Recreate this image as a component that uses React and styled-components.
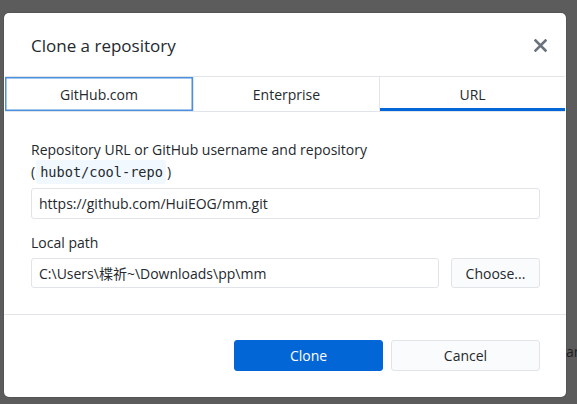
import React, { useState } from 'react';
import styled, { createGlobalStyle } from 'styled-components';

const GlobalStyle = createGlobalStyle`
  html, body {
    margin: 0;
    padding: 0;
    background-color: #5c5c5c;
  }
  body {
    font-family: "Segoe UI", "Open Sans", "Noto Sans CJK SC", sans-serif;
    color: #24292e;
  }
`;

const Page = styled.div`
  position: relative;
  width: 577px;
  height: 404px;
  overflow: hidden;
  padding: 13px 0 0 4px;
  box-sizing: border-box;
`;

const BehindText = styled.span`
  position: absolute;
  left: 566px;
  top: 342px;
  font-size: 14px;
  color: #1e1e1e;
`;

const Dialog = styled.div`
  display: flex;
  flex-direction: column;
  width: 562px;
  height: 384px;
  background-color: #ffffff;
  border-radius: 5px;
  box-shadow: 0 0 0 1px rgba(0, 0, 0, 0.08);
  box-sizing: border-box;
`;

const Header = styled.div`
  display: flex;
  flex-direction: row;
  align-items: center;
  justify-content: space-between;
  height: 63px;
  padding: 2px 15px 0 27px;
  box-sizing: border-box;
`;

const Title = styled.div`
  font-size: 17px;
  font-weight: 400;
  color: #24292e;
`;

const CloseButton = styled.button`
  display: flex;
  align-items: center;
  justify-content: center;
  width: 22px;
  height: 22px;
  background: none;
  border: none;
  padding: 0;
  cursor: pointer;
`;

const TabBar = styled.div`
  display: grid;
  grid-template-columns: 188px 186px 186px;
  margin: 0 1px;
  height: 36px;
  border-top: 1px solid #e1e4e8;
  border-bottom: 1px solid #e1e4e8;
  box-sizing: border-box;
`;

const Tab = styled.button`
  position: relative;
  display: flex;
  align-items: center;
  justify-content: center;
  background: #ffffff;
  border: none;
  border-left: ${(p) => (p.$first ? 'none' : '1px solid #e1e4e8')};
  font-family: inherit;
  font-size: 14px;
  color: #24292e;
  padding: 0;
  cursor: pointer;
  box-shadow: ${(p) => (p.$focused ? 'inset 0 0 0 1.5px #4a8fe0' : 'none')};

  &::after {
    content: '';
    position: absolute;
    left: 0;
    right: 0;
    bottom: 0;
    height: 3px;
    background-color: ${(p) => (p.$selected ? '#0366d6' : 'transparent')};
  }
`;

const Content = styled.div`
  display: flex;
  flex-direction: column;
  padding: 28px 26px 26px 27px;
  border-bottom: 1px solid #e1e4e8;
`;

const Label = styled.div`
  font-size: 14px;
  line-height: 20px;
  color: #24292e;
  margin-top: ${(p) => p.$top || 0}px;
`;

const Hint = styled.div`
  display: flex;
  align-items: center;
  font-size: 14px;
  line-height: 24px;
`;

const Code = styled.code`
  font-family: "DejaVu Sans Mono", "Liberation Mono", monospace;
  font-size: 13.6px;
  background-color: #f1f8ff;
  border-radius: 3px;
  padding: 0 3px 0 4px;
  margin: 0 1px;
  color: #24292e;
`;

const Row = styled.div`
  display: flex;
  flex-direction: row;
  gap: 12px;
  margin-top: ${(p) => p.$top || 0}px;
`;

const TextInput = styled.input`
  flex: 1;
  height: ${(p) => p.$h || 30}px;
  box-sizing: border-box;
  border: 1px solid #e1e4e8;
  border-radius: 3px;
  padding: 0 7px;
  font-family: "Segoe UI", "Open Sans", "Noto Sans CJK SC", sans-serif;
  font-size: 14px;
  color: #24292e;
  outline: none;
`;

const Button = styled.button`
  height: ${(p) => p.$h || 31}px;
  width: ${(p) => p.$w}px;
  box-sizing: border-box;
  border-radius: 3px;
  font-family: inherit;
  font-size: 14px;
  cursor: pointer;
  border: 1px solid ${(p) => (p.$primary ? '#0366d6' : '#e1e4e8')};
  background-color: ${(p) => (p.$primary ? '#0366d6' : '#fafbfc')};
  color: ${(p) => (p.$primary ? '#ffffff' : '#24292e')};
`;

const Footer = styled.div`
  display: flex;
  flex-direction: row;
  justify-content: flex-end;
  gap: 8px;
  padding: 25px 26px 0 0;
`;

function CloseIcon() {
  return (
    <svg width="13" height="13" viewBox="0 0 13 13">
      <path d="M1.5 1.5 L11.5 11.5 M11.5 1.5 L1.5 11.5" stroke="#6a737d" strokeWidth="2.6" strokeLinecap="square" />
    </svg>
  );
}

export default function App() {
  const [tab, setTab] = useState('url');
  const [url, setUrl] = useState('https://github.com/HuiEOG/mm.git');
  const [path, setPath] = useState('C:\\Users\\楪祈~\\Downloads\\pp\\mm');

  return (
    <Page>
      <GlobalStyle />
      <BehindText>an</BehindText>
      <Dialog>
        <Header>
          <Title>Clone a repository</Title>
          <CloseButton aria-label="Close">
            <CloseIcon />
          </CloseButton>
        </Header>
        <TabBar>
          <Tab $first $focused $selected={tab === 'github'} onClick={() => setTab('github')}>GitHub.com</Tab>
          <Tab $selected={tab === 'enterprise'} onClick={() => setTab('enterprise')}>Enterprise</Tab>
          <Tab $selected={tab === 'url'} onClick={() => setTab('url')}>URL</Tab>
        </TabBar>
        <Content>
          <Label>Repository URL or GitHub username and repository</Label>
          <Hint>
            (<Code>hubot/cool-repo</Code>)
          </Hint>
          <Row $top={4}>
            <TextInput $h={31} value={url} onChange={(e) => setUrl(e.target.value)} />
          </Row>
          <Label $top={14}>Local path</Label>
          <Row $top={5}>
            <TextInput value={path} onChange={(e) => setPath(e.target.value)} />
            <Button $w={89} $h={30}>Choose...</Button>
          </Row>
        </Content>
        <Footer>
          <Button $primary $w={149}>Clone</Button>
          <Button $w={149}>Cancel</Button>
        </Footer>
      </Dialog>
    </Page>
  );
}
